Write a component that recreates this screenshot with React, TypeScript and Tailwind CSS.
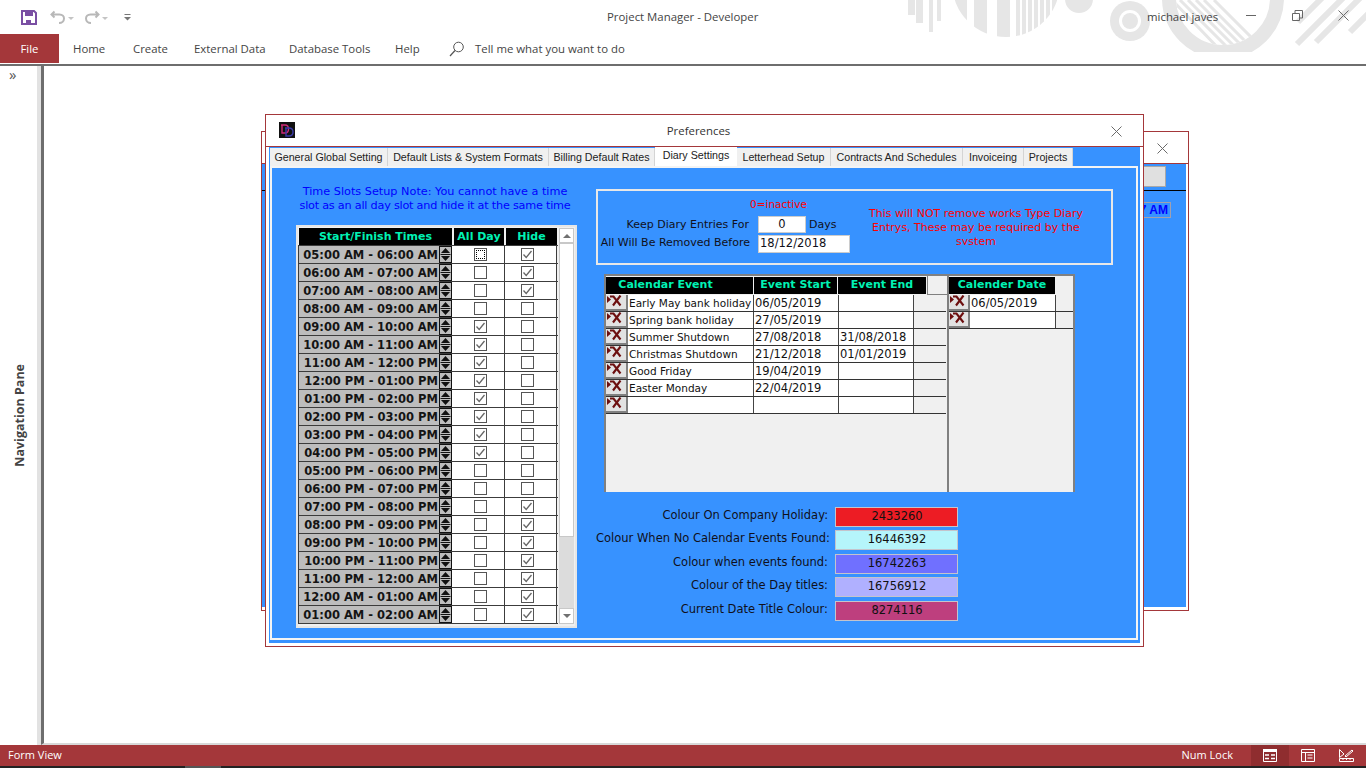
import React from "react";

const times = [
  "05:00 AM - 06:00 AM","06:00 AM - 07:00 AM","07:00 AM - 08:00 AM","08:00 AM - 09:00 AM","09:00 AM - 10:00 AM","10:00 AM - 11:00 AM","11:00 AM - 12:00 PM",
  "12:00 PM - 01:00 PM","01:00 PM - 02:00 PM","02:00 PM - 03:00 PM","03:00 PM - 04:00 PM","04:00 PM - 05:00 PM","05:00 PM - 06:00 PM","06:00 PM - 07:00 PM",
  "07:00 PM - 08:00 PM","08:00 PM - 09:00 PM","09:00 PM - 10:00 PM","10:00 PM - 11:00 PM","11:00 PM - 12:00 AM","12:00 AM - 01:00 AM","01:00 AM - 02:00 AM",
];

const tabs = [
  { t: "General Global Setting", w: "w-[118px]" },
  { t: "Default Lists & System Formats", w: "w-[161px]" },
  { t: "Billing Default Rates", w: "w-[106px]" },
  { t: "Diary Settings", w: "w-[82px]", active: true },
  { t: "Letterhead Setup", w: "w-[94px]" },
  { t: "Contracts And Schedules", w: "w-[132px]" },
  { t: "Invoiceing", w: "w-[61px]" },
  { t: "Projects", w: "w-[49px]" },
];

const events = [
  ["Early May bank holiday", "06/05/2019", ""],
  ["Spring bank holiday", "27/05/2019", ""],
  ["Summer Shutdown", "27/08/2018", "31/08/2018"],
  ["Christmas Shutdown", "21/12/2018", "01/01/2019"],
  ["Good Friday", "19/04/2019", ""],
  ["Easter Monday", "22/04/2019", ""],
  ["", "", ""],
];

function CloseX({ className }: { className?: string }) {
  return (
    <svg width="11" height="11" viewBox="0 0 11 11" className={className}>
      <path d="M0.5 0.5L10.5 10.5M10.5 0.5L0.5 10.5" stroke="#6b6b6b" strokeWidth="1" fill="none" />
    </svg>
  );
}

function Spinner() {
  return (
    <svg width="13" height="17" viewBox="0 0 13 17" className="block">
      <rect x="0" y="0" width="13" height="17" fill="#bdbdbd" />
      <rect x="0.5" y="0.5" width="12" height="16" fill="none" stroke="#111" />
      <path d="M6.5 2L11 7H2Z" fill="#111" />
      <rect x="1.5" y="8" width="10" height="1" fill="#111" />
      <path d="M2 10H11L6.5 15Z" fill="#111" />
    </svg>
  );
}

function Check({ checked, focus }: { checked: boolean; focus?: boolean }) {
  return (
    <span className="relative block h-[13px] w-[13px] border border-[#555] bg-white">
      {focus && <span className="absolute inset-[1px] border border-dotted border-black" />}
      {checked && (
        <svg width="11" height="11" viewBox="0 0 11 11" className="absolute left-0 top-0">
          <path d="M1.5 5.5L4.2 8.5L9.5 2" stroke="#666" strokeWidth="1.3" fill="none" />
        </svg>
      )}
    </span>
  );
}

function DelBtn({ w }: { w: string }) {
  return (
    <div className={`h-[16px] ${w} shrink-0 border-b-2 border-r-2 border-[#808080] bg-[#e2e2e2]`}>
      <svg width="16" height="12" viewBox="0 0 16 12" className="block">
        <path d="M1 1L5 4.5L1 8Z" fill="#6d0f0f" />
        <path d="M4 1.5H7.5L14.5 10.5M14.5 0.5L7 10.5" stroke="#6d0f0f" strokeWidth="2.1" fill="none" />
      </svg>
    </div>
  );
}

function Colour({ label, value, bg, mt }: { label: string; value: string; bg: string; mt: string }) {
  return (
    <div className={`flex ${mt} h-[20px] items-center`}>
      <div className="w-[232px] whitespace-nowrap pb-[2px] text-right text-[11.5px] text-[#10101a]">{label}</div>
      <div className={`ml-[7px] flex h-[20px] w-[123px] items-center justify-center border border-[#c4c4cc] pl-[1px] text-[11.5px] text-[#111] ${bg}`}>{value}</div>
    </div>
  );
}

function TitlePattern() {
  return (
    <svg width="458" height="52" viewBox="908 0 458 52" className="absolute left-[908px] top-0">
      <defs>
        <clipPath id="disc"><circle cx="1006" cy="-17" r="54" /></clipPath>
        <clipPath id="inner"><circle cx="1223" cy="-2" r="47" /></clipPath>
      </defs>
      <g fill="#e6e6e6">
        <rect x="908" y="0" width="7" height="15" />
        <rect x="916" y="0" width="7" height="23" />
        <rect x="929" y="0" width="4" height="32" />
        <rect x="937" y="0" width="4" height="21" />
        <g clipPath="url(#disc)">
          <rect x="955" y="0" width="12" height="52" />
          <rect x="974" y="0" width="13" height="52" />
          <rect x="997" y="0" width="13" height="52" />
          <rect x="1016" y="0" width="4" height="52" />
          <rect x="1022" y="0" width="4" height="52" />
          <rect x="1028" y="0" width="4" height="52" />
          <rect x="1034" y="0" width="4" height="52" />
          <rect x="1040" y="0" width="4" height="52" />
          <rect x="1046" y="0" width="4" height="52" />
          <rect x="1052" y="0" width="5" height="52" />
        </g>
        <circle cx="1079" cy="-1" r="14" />
        <circle cx="1130" cy="21" r="20" />
        <circle cx="1130" cy="21" r="11" fill="#fff" />
        <circle cx="1130" cy="21" r="8" />
      </g>
      <circle cx="1223" cy="-2" r="54" fill="none" stroke="#e6e6e6" strokeWidth="14" />
      <g clipPath="url(#inner)" stroke="#e6e6e6" strokeWidth="3" fill="none">
        <path d="M1172 0L1222 52M1180 0L1232 52M1188 0L1240 52M1196 0L1248 52M1204 0L1256 52M1214 0L1266 52" />
      </g>
      <g stroke="#e6e6e6" strokeWidth="6" fill="none">
        <path d="M1297 44L1345 -4M1316 42L1366 -8M1298 22L1322 -2M1350 32L1385 -3" />
      </g>
    </svg>
  );
}

function Ribbon() {
  return (
    <>
      <div className="relative h-[34px] shrink-0 bg-white text-[11.4px] text-[#444]">
        <TitlePattern />
        <div className="relative flex h-full items-center pl-[21px]">
          <svg width="16" height="15" viewBox="0 0 16 15" className="block">
            <path d="M1 1H13L15 3V14H1Z" fill="none" stroke="#7a4fa3" strokeWidth="2" />
            <rect x="4" y="1" width="8" height="5" fill="#7a4fa3" />
            <rect x="5" y="10" width="5" height="4" fill="#7a4fa3" />
          </svg>
          <svg width="16" height="15" viewBox="0 0 16 15" className="ml-[13px] block">
            <path d="M4.5 1.5L1.5 4.5L4.5 7.5M2 4.5H9.5C12.5 4.5 14 6.5 14 8.5C14 11 12 13 9 13" fill="none" stroke="#b8b8b8" strokeWidth="2" />
          </svg>
          <span className="ml-[2px] mt-[2px] h-0 w-0 border-x-[3px] border-t-[3px] border-x-transparent border-t-[#c4c4c4]" />
          <svg width="16" height="15" viewBox="0 0 16 15" className="ml-[10px] block">
            <path d="M11.5 1.5L14.5 4.5L11.5 7.5M14 4.5H6.5C3.5 4.5 2 6.5 2 8.5C2 11 4 13 7 13" fill="none" stroke="#b8b8b8" strokeWidth="2" />
          </svg>
          <span className="ml-[2px] mt-[2px] h-0 w-0 border-x-[3px] border-t-[3px] border-x-transparent border-t-[#c4c4c4]" />
          <svg width="7" height="7" viewBox="0 0 7 7" className="ml-[16px] mt-[1px] block">
            <rect x="0.5" y="0" width="6" height="1" fill="#777" />
            <path d="M0 3H7L3.5 6.5Z" fill="#777" />
          </svg>
          <div className="absolute left-[607px] top-[8px] whitespace-nowrap">Project Manager - Developer</div>
          <div className="absolute left-[1147px] top-[8px] whitespace-nowrap">michael javes</div>
          <div className="absolute left-[1246px] top-[15px] h-px w-[10px] bg-[#666]" />
          <svg width="11" height="11" viewBox="0 0 11 11" className="absolute left-[1292px] top-[10px]">
            <path d="M0.5 3.5H7.5V10.5H0.5ZM3 3V0.5H10.5V8H8" fill="none" stroke="#666" />
          </svg>
          <CloseX className="absolute left-[1338px] top-[10px]" />
        </div>
      </div>
      <div className="relative flex h-[30px] shrink-0 items-center text-[11.4px] text-[#444]">
        <div className="flex h-[29px] w-[59px] items-center justify-center self-start bg-[#a4373a] text-white">File</div>
        <span className="ml-[14px] w-[60px]">Home</span>
        <span className="w-[61px]">Create</span>
        <span className="w-[95px]">External Data</span>
        <span className="w-[106px]">Database Tools</span>
        <span className="w-[54px]">Help</span>
        <svg width="16" height="16" viewBox="0 0 16 16" className="block">
          <circle cx="9.5" cy="6" r="4.8" fill="none" stroke="#555" />
          <path d="M6 9.5L1 15" stroke="#555" strokeWidth="1.2" />
        </svg>
        <span className="ml-[10px]">Tell me what you want to do</span>
      </div>
    </>
  );
}

function TimesList() {
  return (
    <div className="flex h-[403px] w-[281px] border-2 border-[#e6e6e6] bg-[#f0f0f0]">
      <div className="w-[260px] shrink-0">
        <div className="mt-px flex h-[17px] gap-[2px] pl-px text-center text-[11px] font-bold leading-[17px] text-[#00f2b4]">
          <div className="w-[153px] bg-black">Start/Finish Times</div>
          <div className="w-[50px] bg-black">All Day</div>
          <div className="w-[51px] bg-black">Hide</div>
        </div>
        <div className="border-t border-[#3c3c3c]">
          {times.map((t, i) => (
            <div key={t} className="flex h-[18px] border-b border-[#3c3c3c]">
              <div className="w-[141px] border-l border-[#3c3c3c] bg-[#bdbdbd] pr-px text-right text-[11.5px] font-bold leading-[18px] text-[#141414]">{t}</div>
              <Spinner />
              <div className="flex w-[53px] items-center border-r border-[#3c3c3c] bg-white pl-[22px]">
                <Check checked={i >= 4 && i <= 11} focus={i === 0} />
              </div>
              <div className="flex w-[52px] items-center border-r border-[#3c3c3c] bg-white pl-[16px]">
                <Check checked={i <= 2 || i >= 14} />
              </div>
            </div>
          ))}
        </div>
      </div>
      <div className="ml-px mt-px flex h-[396px] w-[15px] flex-col bg-[#dcdcdc]">
        <div className="flex h-[15px] items-center justify-center border border-[#c8c8c8] bg-white">
          <span className="h-0 w-0 border-x-[4px] border-b-[4px] border-x-transparent border-b-[#707070]" />
        </div>
        <div className="h-[294px] border border-[#c8c8c8] bg-white" />
        <div className="flex-1" />
        <div className="flex h-[16px] items-center justify-center border border-[#c8c8c8] bg-white">
          <span className="h-0 w-0 border-x-[4px] border-t-[4px] border-x-transparent border-t-[#707070]" />
        </div>
      </div>
    </div>
  );
}

function Subforms() {
  const cell = "overflow-hidden whitespace-nowrap pl-px leading-[16px] text-[#111]";
  return (
    <div className="ml-[8px] mt-[9px] flex h-[218px] items-start">
      <div className="h-[218px] w-[343px] border-l-2 border-t-2 border-[#808080] bg-[#f0f0f0]">
        <div className="flex h-[19px] gap-px pt-px text-center text-[11px] font-bold leading-[16px] text-[#00f2b4]">
          <div className="h-[17px] w-[147px] bg-black pr-[28px]">Calendar Event</div>
          <div className="h-[17px] w-[83px] bg-black">Event Start</div>
          <div className="h-[17px] w-[88px] bg-black">Event End</div>
          <div className="-mt-px h-[19px] w-[20px] border-b border-l border-[#808080]" />
        </div>
        {events.map((e, i) => (
          <div key={i} className="flex h-[17px] w-[340px] border-b border-[#333]">
            <DelBtn w="w-[22px]" />
            <div className={`w-[126px] border-r border-[#444] bg-white text-[10.5px] ${cell}`}>{e[0]}</div>
            <div className={`w-[85px] border-r border-[#444] bg-white text-[11.5px] ${cell}`}>{e[1]}</div>
            <div className={`w-[75px] border-r border-[#444] bg-white text-[11.5px] ${cell}`}>{e[2]}</div>
          </div>
        ))}
      </div>
      <div className="h-[218px] w-[128px] border-l-2 border-r-2 border-t-2 border-[#808080] bg-[#f0f0f0]">
        <div className="flex h-[19px] pt-px text-center text-[11px] font-bold leading-[16px] text-[#00f2b4]">
          <div className="h-[17px] w-[106px] bg-black">Calender Date</div>
        </div>
        {["06/05/2019", ""].map((d, i) => (
          <div key={i} className="flex h-[17px] border-b border-[#333]">
            <DelBtn w="w-[21px]" />
            <div className={`w-[86px] border-r border-[#444] bg-white text-[11.5px] ${cell}`}>{d}</div>
          </div>
        ))}
      </div>
    </div>
  );
}

function DiaryBox() {
  return (
    <div className="flex h-[76px] w-[517px] border-2 border-[#e8e8e8] text-[11px] text-[#10101a]">
      <div className="w-[260px] shrink-0">
        <div className="mt-[5px] h-[16px] pl-[152px] text-[10.5px] leading-[16px] text-[#ff0000]">0=inactive</div>
        <div className="mt-[4px] flex h-[17px] items-center">
          <div className="w-[151px] whitespace-nowrap pt-px text-right">Keep Diary Entries For</div>
          <div className="ml-[9px] flex h-[17px] w-[48px] items-center justify-center border border-[#ccc] bg-white text-[11.5px]">0</div>
          <div className="ml-[3px] pt-px">Days</div>
        </div>
        <div className="mt-[2px] flex h-[18px] items-center">
          <div className="w-[152px] whitespace-nowrap pb-[2px] text-right">All Will Be Removed Before</div>
          <div className="ml-[8px] flex h-[18px] w-[92px] items-center border border-[#ccc] bg-white pl-px text-[11.5px]">18/12/2018</div>
        </div>
      </div>
      <div className="ml-[5px] mt-[16px] h-[38px] w-[226px] overflow-hidden text-center text-[11px] leading-[14px] text-[#ff0000]">
        This will NOT remove works Type Diary Entrys, These may be required by the system
      </div>
    </div>
  );
}

function Preferences() {
  return (
    <div className="absolute left-[265px] top-[48px] flex h-[533px] w-[879px] flex-col border border-[#a4373a] bg-white font-['DejaVu_Sans',sans-serif]">
      <div className="relative flex h-[32px] shrink-0 items-center justify-center border-b border-[#a4373a] pr-[12px] pt-px">
        <svg width="16" height="16" viewBox="0 0 16 16" className="absolute left-[13px] top-[7px]">
          <rect width="16" height="16" fill="#111" />
          <path d="M2 3H6C9 3 9.5 5 9.5 7C9.5 10 8 11 6 11H3V3" fill="none" stroke="#d02a78" strokeWidth="1.4" />
          <path d="M6 6H10C13 6 14 8 14 10C14 13 12 14 10 14H7V6" fill="none" stroke="#3a3aa8" strokeWidth="1.4" />
        </svg>
        <span className="font-['Open_Sans',sans-serif] text-[11.4px] text-[#333]">Preferences</span>
        <CloseX className="absolute left-[845px] top-[11px]" />
      </div>
      <div className="ml-[3px] mr-[3px] flex h-[496px] flex-col bg-[#3792ff]">
        <div className="flex h-[19px] shrink-0 items-end pl-px">
          {tabs.map((t) => (
            <div
              key={t.t}
              className={`${t.w} ${t.active ? "h-[19px] bg-white pb-[2px]" : "h-[18px] border-r border-[#d4d4d4] bg-[#f0f0f0] pt-px"} flex items-center justify-center whitespace-nowrap font-['Liberation_Sans',sans-serif] text-[10.7px] text-[#222]`}
            >
              {t.t}
            </div>
          ))}
        </div>
        <div className="ml-px mr-[2px] flex h-[474px] border-2 border-[#f4f4f4]">
          <div className="ml-[24px] w-[281px] shrink-0">
            <div className="mt-[17px] h-[40px] whitespace-nowrap pr-[3px] text-center text-[11.25px] leading-[14px] text-[#0000ff]">
              <div>Time Slots Setup Note: You cannot have a time</div>
              <div className="tracking-[-0.23px]">slot as an all day slot and hide it at the same time</div>
            </div>
            <TimesList />
          </div>
          <div className="ml-[19px] flex-1">
            <div className="mt-[21px]"><DiaryBox /></div>
            <Subforms />
            <div className="mt-[15px]">
              <Colour label="Colour On Company Holiday:" value="2433260" bg="bg-[#ed1c24]" mt="mt-0" />
              <Colour label="Colour When No Calendar Events Found:" value="16446392" bg="bg-[#b5f5fb]" mt="mt-[3px]" />
              <Colour label="Colour when events found:" value="16742263" bg="bg-[#7070ff]" mt="mt-[4px]" />
              <Colour label="Colour of the Day titles:" value="16756912" bg="bg-[#b0b0ff]" mt="mt-[3px]" />
              <Colour label="Current Date Title Colour:" value="8274116" bg="bg-[#be3f7e]" mt="mt-[4px]" />
            </div>
          </div>
        </div>
      </div>
    </div>
  );
}

function BackWindow() {
  return (
    <div className="absolute left-[261px] top-[65px] flex h-[480px] w-[928px] flex-col border border-[#a4373a] bg-white font-['DejaVu_Sans',sans-serif]">
      <div className="relative h-[32px] shrink-0 border-b border-[#a4373a]">
        <CloseX className="absolute left-[895px] top-[11px]" />
      </div>
      <div className="mb-[3px] mr-[2px] flex flex-1 flex-col items-end bg-[#3792ff]">
        <div className="mr-[20px] mt-[2px] h-[21px] w-[60px] border border-[#a8a8a8] bg-[#e0e0e0]" />
        <div className="mt-[3px] h-px w-full bg-black" />
        <div className="mr-[15px] mt-[11px] flex h-[16px] w-[50px] items-center justify-end border border-[#a0a0b0] pr-[2px] font-['Liberation_Sans',sans-serif] text-[12px] font-bold text-[#0000ff]">7 AM</div>
      </div>
    </div>
  );
}

export default function App() {
  return (
    <div className="flex h-[768px] w-[1366px] flex-col overflow-hidden bg-white font-['Open_Sans',sans-serif]">
      <Ribbon />
      <div className="relative flex flex-1 border-t-2 border-[#6e6e6e]">
        <div className="flex w-[37px] shrink-0 flex-col bg-white">
          <div className="pl-[9px] text-[15px] leading-[16px] text-[#555]">»</div>
          <div className="mt-[282px] flex justify-center pl-[3px]">
            <span className="rotate-180 whitespace-nowrap text-[12.5px] font-bold text-[#444] [writing-mode:vertical-rl]">Navigation Pane</span>
          </div>
        </div>
        <div className="w-[4px] shrink-0 bg-[#e2e2e2]" />
        <div className="flex-1 border-b-2 border-l-[3px] border-b-[#d8d8d8] border-l-[#6e6e6e] bg-white" />
      </div>
      <div className="absolute left-0 top-[66px] h-0 w-0">
        <div className="relative h-[679px] w-[1366px]">
          <BackWindow />
          <Preferences />
        </div>
      </div>
      <div className="flex h-[21px] shrink-0 items-center bg-[#a4373a] pl-[8px] text-[11px] text-white">
        <span>Form View</span>
        <span className="ml-auto">Num Lock</span>
        <div className="ml-[18px] flex h-full w-[38px] items-center justify-center bg-[#8f2d2f]">
          <svg width="14" height="13" viewBox="0 0 14 13"><path d="M0.5 0.5H13.5V12.5H0.5Z" fill="none" stroke="#fff" /><rect x="0" y="0" width="14" height="3" fill="#fff" /><path d="M2 6H6M8 6H12M2 9.5H6M8 9.5H12" stroke="#fff" strokeWidth="1.5" /></svg>
        </div>
        <div className="flex h-full w-[38px] items-center justify-center">
          <svg width="14" height="13" viewBox="0 0 14 13"><path d="M0.5 0.5H13.5V12.5H0.5ZM0.5 3.5H13.5M4.5 3.5V12.5M6.5 6H11.5M6.5 9H11.5" fill="none" stroke="#fff" /></svg>
        </div>
        <div className="flex h-full w-[38px] items-center justify-center">
          <svg width="15" height="13" viewBox="0 0 15 13"><path d="M0.5 0.5L5 5L0.5 8.5ZM6 7L13 1L14 2L7 8ZM0.5 9.5H14.5V12.5H0.5ZM4 9.5V11M7.5 9.5V11M11 9.5V11" fill="none" stroke="#fff" /></svg>
        </div>
        <div className="w-px" />
      </div>
      <div className="relative h-[2px] shrink-0 bg-[#222]">
        <div className="ml-[185px] h-[2px] w-[36px] bg-[#555]" />
      </div>
    </div>
  );
}
